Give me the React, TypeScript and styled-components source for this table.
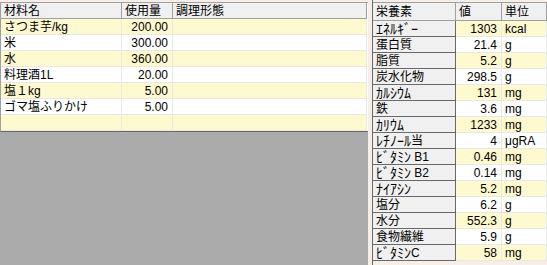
import styled, { createGlobalStyle } from "styled-components";

const GlobalStyle = createGlobalStyle`
  body {
    margin: 0;
    background: #f7efe7;
    font-family: "Liberation Sans", "Noto Sans CJK JP", sans-serif;
    font-size: 12px;
    color: #000;
  }
`;

const Page = styled.div`
  display: flex;
  width: 547px;
  height: 265px;
  overflow: hidden;
`;

const LeftPane = styled.div`
  width: 368px;
  display: flex;
  flex-direction: column;
  padding-top: 2px;
  box-sizing: border-box;
`;

const GreyArea = styled.div`
  flex: 1;
  background: #ababab;
  display: flex;
  flex-direction: column;
`;

const Table = styled.div`
  background: #fff;
  border-left: 1px solid #a0a0a0;
  border-top: 1px solid #a0a0a0;
  border-bottom: 1px solid #696969;
`;

const Row = styled.div<{ $cols: string; $h: number }>`
  display: grid;
  grid-template-columns: ${(p) => p.$cols};
  height: ${(p) => p.$h}px;
`;

const HeadCell = styled.div`
  background: #f0f0f0;
  border-right: 1px solid #a0a0a0;
  border-bottom: 1px solid #a0a0a0;
  padding-left: 3px;
  display: flex;
  align-items: center;
  line-height: 1;
  white-space: nowrap;
`;

const Cell = styled.div<{ $alt: boolean; $right?: boolean }>`
  background: ${(p) => (p.$alt ? "#fff9d0" : "#ffffff")};
  border-right: 1px solid #e8e8e8;
  border-bottom: 1px solid #e8e8e8;
  padding: 0 4px 0 3px;
  display: flex;
  align-items: center;
  justify-content: ${(p) => (p.$right ? "flex-end" : "flex-start")};
  line-height: 1;
  white-space: nowrap;
`;

const Splitter = styled.div`
  width: 4px;
  border-right: 1px solid #696969;
`;

const RightPane = styled.div`
  flex: 1;
  padding-top: 2px;
  padding-bottom: 4px;
  box-sizing: border-box;
`;

const RightTable = styled.div`
  border-top: 1px solid #a0a0a0;
`;

const RowHead = styled.div`
  background: #f0f0f0;
  border-right: 1px solid #696969;
  border-bottom: 1px solid #696969;
  padding-left: 3px;
  display: flex;
  align-items: center;
  line-height: 1;
  white-space: pre;
`;

// half-width katakana look tiny in Noto CJK, bump them up a bit
const Kana = styled.span`
  font-size: 14px;
`;

const leftCols = "121px 51px 194px";
const rightCols = "83px 46px 1fr";

const ingredients: [string, string][] = [
  ["さつま芋/kg", "200.00"],
  ["米", "300.00"],
  ["水", "360.00"],
  ["料理酒1L", "20.00"],
  ["塩１kg", "5.00"],
  ["ゴマ塩ふりかけ", "5.00"],
  ["", ""],
];

const nutrients: [string, string, string][] = [
  ["ｴﾈﾙｷﾞｰ", "1303", "kcal"],
  ["蛋白質", "21.4", "g"],
  ["脂質", "5.2", "g"],
  ["炭水化物", "298.5", "g"],
  ["ｶﾙｼｳﾑ", "131", "mg"],
  ["鉄", "3.6", "mg"],
  ["ｶﾘｳﾑ", "1233", "mg"],
  ["ﾚﾁﾉｰﾙ当", "4", "μgRA"],
  ["ﾋﾞﾀﾐﾝ B1", "0.46", "mg"],
  ["ﾋﾞﾀﾐﾝ B2", "0.14", "mg"],
  ["ﾅｲｱｼﾝ", "5.2", "mg"],
  ["塩分", "6.2", "g"],
  ["水分", "552.3", "g"],
  ["食物繊維", "5.9", "g"],
  ["ﾋﾞﾀﾐﾝC", "58", "mg"],
];

function NutrientName({ text }: { text: string }) {
  const parts = text.split(/([\uFF61-\uFF9F]+)/).filter(Boolean);
  return (
    <>
      {parts.map((p, i) =>
        /[\uFF61-\uFF9F]/.test(p) ? <Kana key={i}>{p}</Kana> : <span key={i}>{p}</span>,
      )}
    </>
  );
}

export default function App() {
  return (
    <>
      <GlobalStyle />
      <Page>
        <LeftPane>
          <GreyArea>
            <Table>
              <Row $cols={leftCols} $h={16}>
                <HeadCell>材料名</HeadCell>
                <HeadCell>使用量</HeadCell>
                <HeadCell>調理形態</HeadCell>
              </Row>
              {ingredients.map(([name, qty], i) => (
                <Row key={i} $cols={leftCols} $h={16}>
                  <Cell $alt={i % 2 === 0}>{name}</Cell>
                  <Cell $alt={i % 2 === 0} $right>
                    {qty}
                  </Cell>
                  <Cell $alt={i % 2 === 0} />
                </Row>
              ))}
            </Table>
          </GreyArea>
        </LeftPane>
        <Splitter />
        <RightPane>
          <RightTable>
            <Row $cols={rightCols} $h={18}>
              <HeadCell>栄養素</HeadCell>
              <HeadCell>値</HeadCell>
              <HeadCell>単位</HeadCell>
            </Row>
            {nutrients.map(([name, value, unit], i) => (
              <Row key={name} $cols={rightCols} $h={16}>
                <RowHead>
                  <NutrientName text={name} />
                </RowHead>
                <Cell $alt={i % 2 === 0} $right>
                  {value}
                </Cell>
                <Cell $alt={i % 2 === 0}>{unit}</Cell>
              </Row>
            ))}
          </RightTable>
        </RightPane>
      </Page>
    </>
  );
}
